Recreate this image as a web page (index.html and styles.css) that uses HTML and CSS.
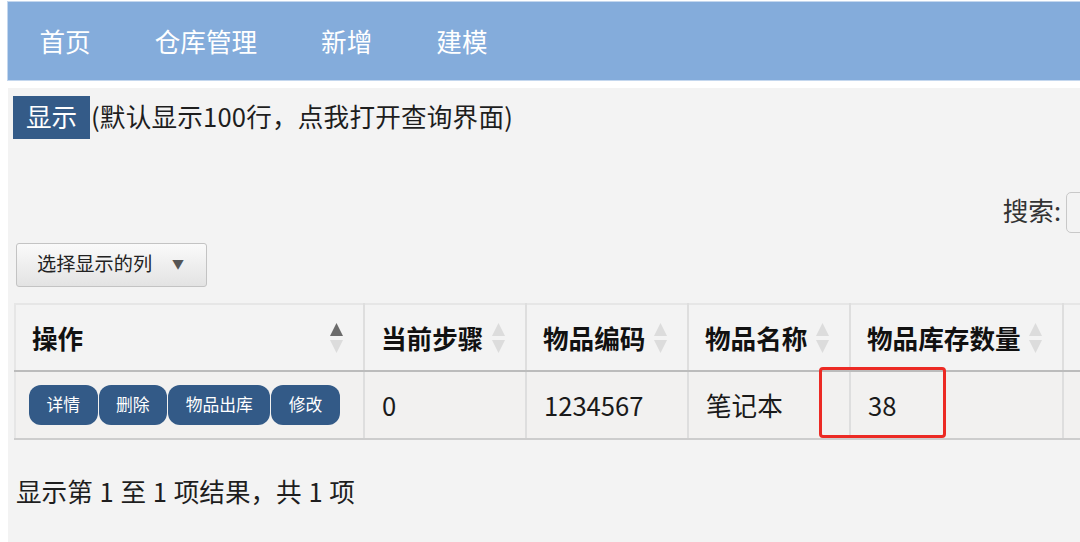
FILE: index.html
```html
<!DOCTYPE html>
<html lang="zh-CN">
<head>
<meta charset="utf-8">
<title>仓库管理</title>
<link rel="stylesheet" href="styles.css">
</head>
<body>
<nav class="nav">
  <a class="nav-item">首页</a>
  <a class="nav-item">仓库管理</a>
  <a class="nav-item">新增</a>
  <a class="nav-item">建模</a>
</nav>
<main class="content">
  <div class="query-line">
    <button class="btn-show">显示</button><span class="hint">(默认显示100行，点我打开查询界面)</span>
  </div>
  <div class="search-row">
    <label class="search-label">搜索:</label>
    <input class="search-input" type="search">
  </div>
  <div class="toolbar">
    <button class="col-btn"><span>选择显示的列</span><span class="caret">▼</span></button>
  </div>
  <div class="table-wrap">
    <table class="data">
      <colgroup>
        <col class="c-op"><col class="c-mid"><col class="c-mid"><col class="c-mid"><col class="c-qty"><col class="c-last">
      </colgroup>
      <thead>
        <tr>
          <th class="first"><div class="th-in"><span>操作</span>
            <svg class="sort" viewBox="0 0 13 30" width="13" height="30"><polygon points="6.5,0 13,13 0,13" fill="#6b6b6b"/><polygon points="0,17 13,17 6.5,30" fill="#dcdcdc"/></svg></div></th>
          <th><div class="th-in"><span>当前步骤</span>
            <svg class="sort" viewBox="0 0 13 30" width="13" height="30"><polygon points="6.5,0 13,13 0,13" fill="#dcdcdc"/><polygon points="0,17 13,17 6.5,30" fill="#dcdcdc"/></svg></div></th>
          <th><div class="th-in"><span>物品编码</span>
            <svg class="sort" viewBox="0 0 13 30" width="13" height="30"><polygon points="6.5,0 13,13 0,13" fill="#dcdcdc"/><polygon points="0,17 13,17 6.5,30" fill="#dcdcdc"/></svg></div></th>
          <th><div class="th-in"><span>物品名称</span>
            <svg class="sort" viewBox="0 0 13 30" width="13" height="30"><polygon points="6.5,0 13,13 0,13" fill="#dcdcdc"/><polygon points="0,17 13,17 6.5,30" fill="#dcdcdc"/></svg></div></th>
          <th><div class="th-in"><span>物品库存数量</span>
            <svg class="sort" viewBox="0 0 13 30" width="13" height="30"><polygon points="6.5,0 13,13 0,13" fill="#dcdcdc"/><polygon points="0,17 13,17 6.5,30" fill="#dcdcdc"/></svg></div></th>
          <th><div class="th-in"><span>物品单位</span></div></th>
        </tr>
      </thead>
      <tbody>
        <tr>
          <td class="first actions"><button class="act">详情</button><button class="act">删除</button><button class="act">物品出库</button><button class="act">修改</button></td>
          <td>0</td>
          <td>1234567</td>
          <td>笔记本</td>
          <td>38</td>
          <td></td>
        </tr>
      </tbody>
    </table>
    <div class="highlight"></div>
  </div>
  <div class="info">显示第 1 至 1 项结果，共 1 项</div>
</main>
</body>
</html>
```

FILE: styles.css
```css
html, body {
  margin: 0;
  padding: 0;
}
body {
  background: #ffffff;
  font-family: "Noto Sans CJK SC", "Microsoft YaHei", sans-serif;
  color: #222222;
  width: 1080px;
  height: 542px;
  overflow: hidden;
}

.nav {
  margin: 1px 0 0 7px;
  height: 78px;
  border: 1px solid #c4d7ee;
  border-right: none;
  background: #84acdb;
  display: flex;
  align-items: center;
  white-space: nowrap;
}
.nav-item {
  color: #ffffff;
  font-size: 25.6px;
  line-height: 1;
  padding: 0 32.5px 0 31.5px;
}

.content {
  margin: 7px 0 0 8px;
  background: #f3f3f3;
  height: 454px;
  padding-top: 8px;
  box-sizing: border-box;
  white-space: nowrap;
}

.query-line {
  display: flex;
  align-items: center;
  height: 43px;
  padding-left: 5px;
}
.btn-show {
  background: #345b88;
  color: #ffffff;
  border: none;
  font-family: inherit;
  font-size: 25.6px;
  line-height: 1;
  height: 43px;
  width: 77px;
  padding: 0 0 3px;
}
.hint {
  font-size: 25.6px;
  line-height: 1;
  margin-left: 1px;
  padding-bottom: 4px;
  letter-spacing: 0.2px;
  color: #1e1e1e;
}

.search-row {
  display: flex;
  justify-content: flex-end;
  align-items: center;
  margin-top: 53px;
  height: 41px;
}
.search-label {
  font-size: 25.6px;
  line-height: 1;
  color: #333333;
  margin-right: 5px;
  padding-bottom: 5px;
}
.search-input {
  width: 200px;
  height: 41px;
  box-sizing: border-box;
  border: 1px solid #c8c8c8;
  border-radius: 5px;
  background: #f3f3f3;
  margin-right: -186px;
}

.toolbar {
  margin-top: 10px;
  padding-left: 8px;
}
.col-btn {
  display: flex;
  align-items: center;
  justify-content: space-between;
  width: 191px;
  height: 44px;
  box-sizing: border-box;
  padding: 0 22px 2px 20px;
  border: 1px solid #c3c3c3;
  border-radius: 3px;
  background: linear-gradient(#fafafa, #e3e3e3);
  font-family: inherit;
  font-size: 19.2px;
  line-height: 1;
  color: #222222;
}
.caret {
  font-size: 12px;
  color: #555555;
}

.table-wrap {
  position: relative;
  margin: 16px 0 0 6px;
  width: max-content;
}
.data {
  border-collapse: collapse;
  table-layout: fixed;
  width: 1248px;
}
.c-op { width: 349px; }
.c-mid { width: 162px; }
.c-qty { width: 213px; }
.c-last { width: 200px; }

.data th {
  height: 67px;
  box-sizing: border-box;
  padding: 0 20px 0 16px;
  text-align: left;
  font-size: 25.6px;
  font-weight: bold;
  color: #111111;
  background: #f3f3f3;
  border-top: 2px solid #e6e6e6;
  border-right: 2px solid #dedede;
  border-bottom: 2px solid #bcbcbc;
}
.th-in {
  display: flex;
  align-items: center;
  justify-content: space-between;
  line-height: 1;
}
.sort {
  display: block;
  flex: none;
}
.data td {
  height: 68px;
  box-sizing: border-box;
  padding: 0 16px 0 17px;
  font-size: 25.6px;
  line-height: 1;
  color: #1a1a1a;
  background: #f2f1f0;
  border-right: 2px solid #dedede;
  border-bottom: 2px solid #cdcdcd;
}
.data .first {
  border-left: 2px solid #e6e6e6;
}
.data td.actions {
  padding-left: 13px;
}
.act {
  height: 40px;
  padding: 0 17.5px 2px;
  margin-right: 1px;
  border: none;
  border-radius: 12px;
  background: #335a87;
  color: #ffffff;
  font-family: inherit;
  font-size: 16.8px;
  line-height: 1;
  vertical-align: middle;
}

.highlight {
  position: absolute;
  left: 805px;
  top: 64px;
  width: 127px;
  height: 71px;
  box-sizing: border-box;
  border: 3px solid #ec2a24;
  border-radius: 4px;
}

.info {
  margin: 35px 0 0 8px;
  font-size: 25.6px;
  line-height: 31px;
  word-spacing: 1px;
  color: #1e1e1e;
}
```
